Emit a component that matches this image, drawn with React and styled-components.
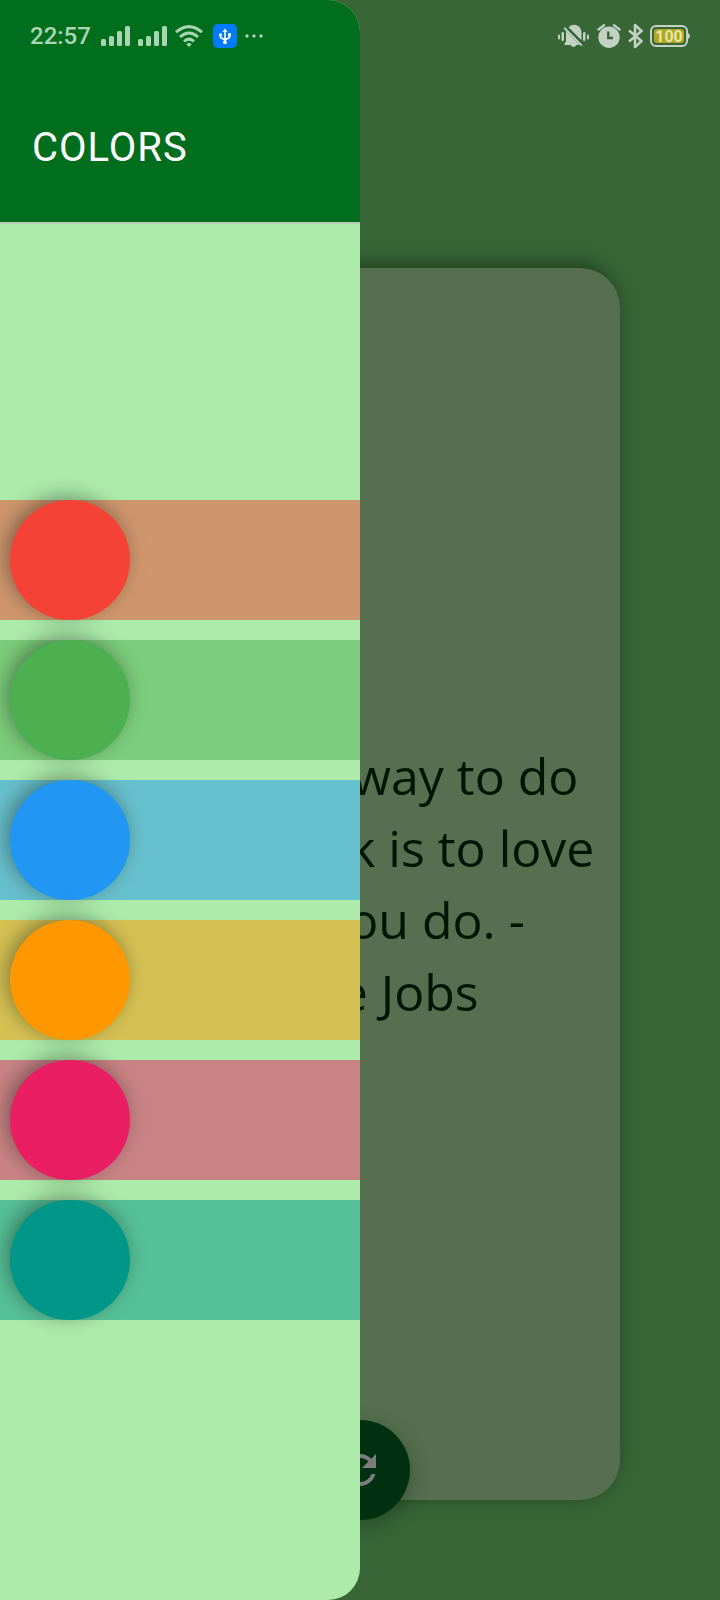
import React from "react";
import styled, { createGlobalStyle } from "styled-components";

const GlobalStyle = createGlobalStyle`
  *, *::before, *::after { box-sizing: border-box; }
  body { margin: 0; background: #386637; font-family: Roboto, sans-serif; }
`;

const Screen = styled.div`
  position: relative;
  display: flex;
  flex-direction: column;
  min-height: 100vh;
  padding: 268px 100px 100px;
  background: #386637;
  overflow: hidden;
`;

const QuoteCard = styled.main`
  position: relative;
  flex: 1;
  display: flex;
  align-items: center;
  justify-content: center;
  border-radius: 40px;
  background: #556f50;
  box-shadow: -4px -4px 20px rgba(0, 20, 0, 0.5);
`;

const Quote = styled.p`
  margin: 0;
  color: #001500;
  font-family: "Open Sans", sans-serif;
  font-size: 50px;
  line-height: 72px;
  text-align: center;
  white-space: pre-line;
`;

const RefreshButton = styled.button`
  position: absolute;
  left: 50%;
  bottom: -20px;
  display: grid;
  place-items: center;
  width: 100px;
  height: 100px;
  margin-left: -50px;
  padding: 0;
  border: 0;
  border-radius: 50%;
  background: #00300f;
  color: #7c7c7c;
  box-shadow: 0 6px 20px rgba(0, 20, 0, 0.3);
`;

const Drawer = styled.aside`
  position: absolute;
  top: 0;
  bottom: 0;
  left: 0;
  display: flex;
  flex-direction: column;
  width: 50%;
  overflow: hidden;
  border-radius: 0 32px 32px 0;
  background: #acebaa;
`;

const DrawerHeader = styled.header`
  height: 224px;
  padding: 124px 32px 0;
  border-bottom: 2px solid #b6cdb2;
  background: #006e1c;
`;

const Title = styled.h1`
  margin: 0;
  color: #fff;
  font-size: 40px;
  font-weight: 400;
  line-height: 48px;
  letter-spacing: 1px;
`;

const ColorList = styled.nav`
  flex: 1;
  display: flex;
  flex-direction: column;
  justify-content: center;
  gap: 20px;
  padding-bottom: 4px;
`;

const ColorRow = styled.button`
  display: flex;
  padding: 0 10px;
  border: 0;
  background: ${(p) => p.$tint};
`;

const Swatch = styled.span`
  width: 120px;
  height: 120px;
  border-radius: 50%;
  background: ${(p) => p.$color};
  box-shadow: -4px -4px 20px rgba(0, 0, 0, 0.36);
`;

const StatusBar = styled.div`
  position: absolute;
  top: 0;
  left: 0;
  right: 0;
  display: flex;
  align-items: center;
  justify-content: space-between;
  height: 72px;
  padding: 0 30px;
`;

const StatusGroup = styled.div`
  display: flex;
  align-items: center;
  gap: ${(p) => p.$gap}px;
  color: ${(p) => p.$color};
`;

const Clock = styled.time`
  padding-right: 2px;
  font-size: 24px;
  font-weight: 500;
  line-height: 32px;
`;

const Glyph = styled.svg`
  display: block;
  flex: none;
  fill: currentColor;
`;

const colors = [
  { name: "Red", color: "#f44336", tint: "#cf966d" },
  { name: "Green", color: "#4caf50", tint: "#7ccd7b" },
  { name: "Blue", color: "#2196f3", tint: "#67c0cd" },
  { name: "Orange", color: "#ff9800", tint: "#d5c153" },
  { name: "Pink", color: "#e91e63", tint: "#c98384" },
  { name: "Teal", color: "#009688", tint: "#56c098" },
];

const Signal = () => (
  <Glyph width="29" height="20" viewBox="0 0 29 20">
    <rect x="0" y="13" width="5" height="7" rx="1.6" />
    <rect x="8" y="10" width="5" height="10" rx="1.6" />
    <rect x="16" y="5" width="5" height="15" rx="1.6" />
    <rect x="24" y="0" width="5" height="20" rx="1.6" />
  </Glyph>
);

const Wifi = () => (
  <Glyph width="30" height="22" viewBox="0 0 30 22">
    <g fill="none" stroke="currentColor" strokeWidth="3">
      <path d="M1 7.200Q14-4 27 7.200" />
      <path d="M5 12Q14 4 23 12" />
      <path d="M9 16.300Q14 12 19 16.300" />
    </g>
    <path d="M11.300 19.200Q14 17 16.700 19.200L14 22Z" />
  </Glyph>
);

const Usb = () => (
  <Glyph width="24" height="24" viewBox="0 0 24 24">
    <rect width="24" height="24" rx="5" fill="#007bff" />
    <g fill="none" stroke="#fff" strokeWidth="1.600">
      <path d="M12 7v11M7.500 11v2.500L12 16M16.500 11v2.500L12 16" />
    </g>
    <g fill="#fff">
      <path d="M12 4.500l2.500 3.500h-5z" />
      <circle cx="12" cy="18.300" r="1.900" />
      <circle cx="7.500" cy="10.800" r="1.600" />
      <rect x="15" y="9.300" width="3" height="3" />
    </g>
  </Glyph>
);

const More = () => (
  <Glyph width="18" height="4" viewBox="0 0 18 4">
    <circle cx="2" cy="2" r="1.700" />
    <circle cx="9" cy="2" r="1.700" />
    <circle cx="16" cy="2" r="1.700" />
  </Glyph>
);

const Muted = () => (
  <Glyph width="32" height="24" viewBox="0 0 32 24">
    <rect x="0" y="10.500" width="2" height="5" rx="1" />
    <rect x="3.500" y="8" width="2.500" height="9" rx="1.200" />
    <rect x="25" y="8" width="2.500" height="9" rx="1.200" />
    <rect x="29" y="10.500" width="2" height="5" rx="1" />
    <path d="M10.500 3.300Q12.500 .8 16 .8C21 .8 23.500 5 23.500 9v7.300Z" />
    <path d="M8 7L22 21H18.500Q15.500 25 12.500 21H6.500V19.500L8 17.500Z" />
    <path d="M6.200 3.800L24 21.600" stroke="currentColor" strokeWidth="2" />
    <path d="M7.900 2.900L25.200 20.200" stroke="#386637" strokeWidth="1.300" />
  </Glyph>
);

const Alarm = () => (
  <Glyph width="24" height="24" viewBox="0 0 24 24">
    <path d="M1.500 5.500L7 1.300M22.500 5.500L17 1.300" fill="none" stroke="currentColor" strokeWidth="2.400" strokeLinecap="round" />
    <circle cx="12" cy="13.200" r="10.700" />
    <path d="M11.300 7.500V14h4.700" fill="none" stroke="#386637" strokeWidth="2.400" />
  </Glyph>
);

const Bluetooth = () => (
  <Glyph width="15" height="26" viewBox="0 0 15 26">
    <path d="M1 7.500L13.500 18L7 24V2l6.500 6L1 18.500" fill="none" stroke="currentColor" strokeWidth="2.600" strokeLinejoin="round" />
  </Glyph>
);

const Battery = () => (
  <Glyph width="40" height="22" viewBox="0 0 40 22">
    <rect x="1" y="1" width="36" height="20" rx="5" fill="none" stroke="currentColor" strokeWidth="2" />
    <path d="M38 8q2 1 2 3t-2 3z" />
    <rect x="4" y="4" width="30" height="14" rx="3" fill="#b0a81f" />
    <text x="19" y="16.500" textAnchor="middle" fontFamily="Roboto, sans-serif" fontSize="16" fontWeight="700" fill="#e5e5a8">100</text>
  </Glyph>
);

export default function App() {
  return (
    <>
      <GlobalStyle />
      <Screen>
        <QuoteCard>
          <Quote>{"The only way to do\ngreat work is to love\nwhat you do. -\nSteve Jobs"}</Quote>
          <RefreshButton aria-label="Refresh">
            <Glyph width="48" height="48" viewBox="0 0 24 24">
              <path d="M17.650 6.350C16.200 4.900 14.210 4 12 4c-4.420 0-7.990 3.580-7.990 8s3.570 8 7.990 8c3.730 0 6.840-2.550 7.730-6h-2.080c-.82 2.330-3.040 4-5.650 4-3.310 0-6-2.690-6-6s2.690-6 6-6c1.660 0 3.140.69 4.220 1.780L13 11h7V4l-2.350 2.350z" />
            </Glyph>
          </RefreshButton>
        </QuoteCard>
        <Drawer>
          <DrawerHeader>
            <Title>COLORS</Title>
          </DrawerHeader>
          <ColorList aria-label="Colors">
            {colors.map(({ name, color, tint }) => (
              <ColorRow key={name} aria-label={name} $tint={tint}>
                <Swatch $color={color} />
              </ColorRow>
            ))}
          </ColorList>
        </Drawer>
        <StatusBar>
          <StatusGroup $gap={8} $color="#aad5b3">
            <Clock>22:57</Clock>
            <Signal />
            <Signal />
            <Wifi />
            <Usb />
            <More />
          </StatusGroup>
          <StatusGroup $gap={7} $color="#c3d1c3">
            <Muted />
            <Alarm />
            <Bluetooth />
            <Battery />
          </StatusGroup>
        </StatusBar>
      </Screen>
    </>
  );
}
